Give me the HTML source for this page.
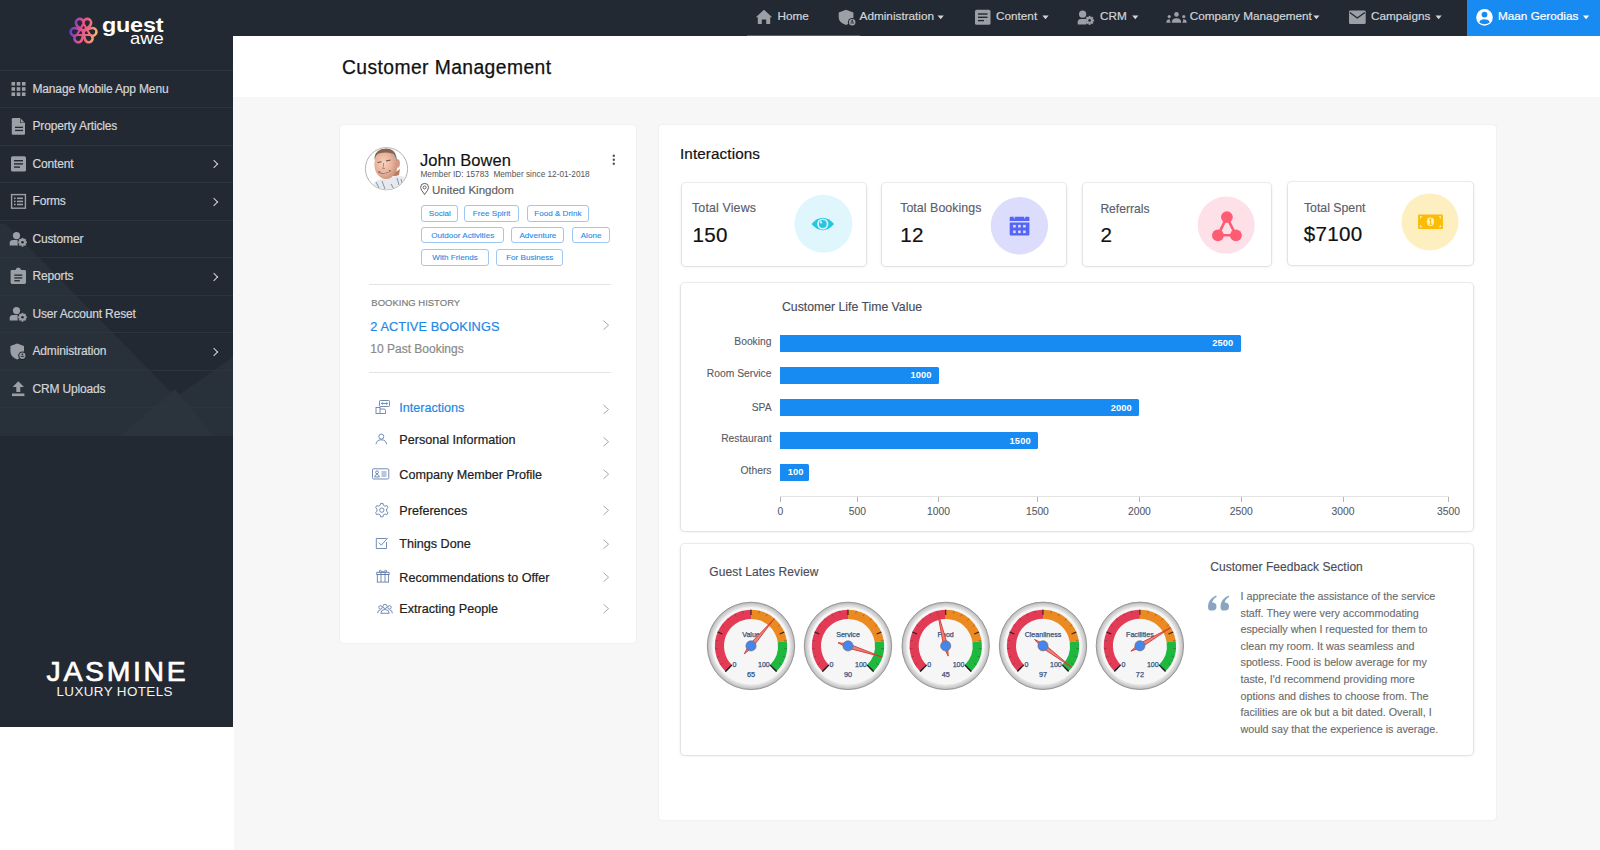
<!DOCTYPE html>
<html><head><meta charset="utf-8">
<style>
*{margin:0;padding:0;box-sizing:border-box}
html,body{width:1600px;height:850px;overflow:hidden;background:#f7f7f7;font-family:"Liberation Sans",sans-serif}
.a{position:absolute}
.t{position:absolute;white-space:nowrap;line-height:1}
#side{left:0;top:0;width:233px;height:727px;background:#232932;overflow:hidden}
#side .sep{position:absolute;left:0;width:233px;height:1px;background:#2d343e}
#side .it{position:absolute;left:32.5px;font-size:12px;letter-spacing:-0.16px;color:#d3d5d9;-webkit-text-stroke:0.2px #d3d5d9}
#side .chev{position:absolute;left:211px;width:6px;height:6px;border-right:1.6px solid #d3d5d9;border-top:1.6px solid #d3d5d9;transform:rotate(45deg)}
#top{left:233px;top:0;width:1367px;height:36px;background:#232932}
#hdr{left:233px;top:36px;width:1367px;height:61px;background:#fff}
#botwhite{left:0;top:727px;width:234px;height:123px;background:#fff}
.card{position:absolute;background:#fff;border-radius:3px;box-shadow:0 0 2px rgba(0,0,0,.10)}
.sc{position:absolute;background:#fff;border-radius:4px;box-shadow:0 0 0 1px rgba(30,30,60,.06),0 0.5px 2.5px 0.5px rgba(0,0,0,.09)}
.nav{font-size:11.75px;color:#d3d5d9;-webkit-text-stroke:0.2px currentColor}
.tag{position:absolute;height:16.3px;border:1px solid #9cc8f2;border-radius:3px;font-size:8.1px;color:#1e88e5;text-align:center;line-height:15.6px;-webkit-text-stroke:0.1px #1e88e5;white-space:nowrap}
.sl{font-size:12.4px;color:#5b5e6b;letter-spacing:0.15px;-webkit-text-stroke:0.15px #5b5e6b}
.sv{font-size:20.6px;color:#111;letter-spacing:0.3px;-webkit-text-stroke:0.2px #111}
.bl{font-size:9.3px;font-weight:bold;color:#fff;letter-spacing:0.1px}
.cl{font-size:10.3px;color:#555a63;-webkit-text-stroke:0.1px #555a63}
.fb{left:1240.5px;font-size:10.75px;color:#6b6b6b;-webkit-text-stroke:0.12px #6b6b6b}
.mi{left:399.3px;font-size:12.6px;color:#212121;-webkit-text-stroke:0.2px currentColor}
</style></head>
<body>
<!-- SIDEBAR -->

<div id="side" class="a">
 <svg class="a" style="left:0;top:0" width="233" height="436" viewBox="0 0 233 436">
  <polygon points="6,224 214,436 0,436 0,224" fill="#283039"/>
  <polygon points="233,357 233,436 120,436" fill="#283039"/>
  <polygon points="175,389 120,436 214,436" fill="#2b333d"/>
 </svg>
 <!-- logo -->
 <svg class="a" style="left:66px;top:15px" width="34" height="32" viewBox="66 15 34 32">
  <defs><linearGradient id="lg" gradientUnits="userSpaceOnUse" x1="70" y1="28" x2="97" y2="34"><stop offset="0" stop-color="#5a3cd6"/><stop offset="0.4" stop-color="#e4508c"/><stop offset="0.75" stop-color="#f07878"/><stop offset="1" stop-color="#f8c070"/></linearGradient></defs>
  <g fill="none" stroke="url(#lg)" stroke-width="2.6" stroke-linejoin="round"><path d="M83.50 31.00 C80.00 28.20 75.90 26.20 75.90 23.00 A3.8 3.8 0 0 1 83.50 22.40 A3.8 3.8 0 0 1 91.10 23.00 C91.10 26.20 87.00 28.20 83.50 31.00 Z"/><path d="M83.50 31.00 C87.67 29.37 91.46 26.82 94.23 28.42 A3.8 3.8 0 0 1 90.95 35.30 A3.8 3.8 0 0 1 86.63 41.58 C83.86 39.98 84.17 35.43 83.50 31.00 Z"/><path d="M83.50 31.00 C82.83 35.43 83.14 39.98 80.37 41.58 A3.8 3.8 0 0 1 76.05 35.30 A3.8 3.8 0 0 1 72.77 28.42 C75.54 26.82 79.33 29.37 83.50 31.00 Z"/><path d="M83.5 23.5 L76.8 35 L90.2 35 Z" stroke-width="2.2"/></g>
 </svg>
 <div class="t" style="left:102px;top:15.3px;font-size:20px;font-weight:bold;color:#fff;transform:scaleX(1.17);transform-origin:0 0;letter-spacing:-0.2px">guest</div>
 <div class="t" style="left:129.5px;top:30px;font-size:17px;color:#fff;transform:scaleX(1.08);transform-origin:0 0">awe</div>

 <div class="sep" style="top:70px"></div>
 <div class="sep" style="top:107px"></div>
 <div class="sep" style="top:145px"></div>
 <div class="sep" style="top:182px"></div>
 <div class="sep" style="top:220px"></div>
 <div class="sep" style="top:257px"></div>
 <div class="sep" style="top:295px"></div>
 <div class="sep" style="top:332px"></div>
 <div class="sep" style="top:370px"></div>
 <div class="sep" style="top:407px"></div>

 <!-- icons -->
 <svg class="a" style="left:0;top:0" width="40" height="400" viewBox="0 0 40 400">
  <g fill="#9b9fa6">
   <!-- grid -->
   <rect x="11.5" y="82" width="3.6" height="3.6"/><rect x="16.7" y="82" width="3.6" height="3.6"/><rect x="21.9" y="82" width="3.6" height="3.6"/>
   <rect x="11.5" y="87.2" width="3.6" height="3.6"/><rect x="16.7" y="87.2" width="3.6" height="3.6"/><rect x="21.9" y="87.2" width="3.6" height="3.6"/>
   <rect x="11.5" y="92.4" width="3.6" height="3.6"/><rect x="16.7" y="92.4" width="3.6" height="3.6"/><rect x="21.9" y="92.4" width="3.6" height="3.6"/>
   <!-- doc -->
   <path d="M13 118 H20 L25 123 V133.5 Q25 134.7 23.8 134.7 H13 Q11.8 134.7 11.8 133.5 V119.2 Q11.8 118 13 118 Z"/>
   <!-- content -->
   <rect x="11" y="156.3" width="15" height="15.2" rx="1.6"/>
   <!-- clipboard -->
   <path d="M12 270 H15.5 Q16 267.5 18.3 267.5 Q20.6 267.5 21.1 270 H24.6 Q26 270 26 271.4 V282.6 Q26 284 24.6 284 H12 Q10.6 284 10.6 282.6 V271.4 Q10.6 270 12 270 Z"/>
   <!-- person+gear x2 -->
   <circle cx="16.5" cy="235.6" r="3.6"/>
   <path d="M9.7 245.5 V243 Q9.7 240 13 240 H17.5 L17.8 245.5 Z"/>
   <circle cx="16.5" cy="310.6" r="3.6"/>
   <path d="M9.7 320.5 V318 Q9.7 315 13 315 H17.5 L17.8 320.5 Z"/>
   <!-- shield -->
   <path d="M17.2 343.4 L24 346 V351 Q24 357 17.2 359.5 Q10.4 357 10.4 351 V346 Z"/>
   <!-- upload -->
   <path d="M18.3 381.3 L24 387 H20.3 V392 H16.3 V387 H12.6 Z"/>
   <rect x="12" y="393.5" width="12.4" height="2.6"/>
  </g>
  <g fill="none" stroke="#9b9fa6">
   <!-- forms outline -->
   <rect x="11.6" y="194.6" width="13.8" height="13.6" stroke-width="1.4"/>
  </g>
  <g fill="#222831">
   <path d="M20 118 V123 H25 Z" fill="#222831"/><path d="M20.6 118.6 V122.4 H24.4 Z" fill="#9b9fa6"/><rect x="15" y="126.7" width="8" height="1.3"/><rect x="15" y="129.8" width="8" height="1.3"/>
   <rect x="14" y="160" width="9" height="1.4"/><rect x="14" y="163.2" width="9" height="1.4"/><rect x="14" y="166.4" width="6" height="1.4"/>
   <rect x="14.3" y="274.5" width="8" height="1.3"/><rect x="14.3" y="277.3" width="8" height="1.3"/><rect x="14.3" y="280.1" width="5.5" height="1.3"/>
   <circle cx="22.4" cy="355.7" r="4.2"/>
  </g>
  <g fill="#9b9fa6">
   <rect x="14" y="197.5" width="1.6" height="1.6"/><rect x="17" y="197.5" width="6" height="1.6"/>
   <rect x="14" y="200.6" width="1.6" height="1.6"/><rect x="17" y="200.6" width="6" height="1.6"/>
   <rect x="14" y="203.7" width="1.6" height="1.6"/><rect x="17" y="203.7" width="6" height="1.6"/>
   <circle cx="22.4" cy="355.7" r="3.1"/>
   <!-- gears -->
   <g transform="translate(22.5 242.3)"><circle r="3.2"/><g id="gt"><rect x="-1" y="-4.4" width="2" height="8.8"/><rect x="-1" y="-4.4" width="2" height="8.8" transform="rotate(45)"/><rect x="-1" y="-4.4" width="2" height="8.8" transform="rotate(90)"/><rect x="-1" y="-4.4" width="2" height="8.8" transform="rotate(135)"/></g></g>
   <g transform="translate(22.5 317.3)"><circle r="3.2"/><rect x="-1" y="-4.4" width="2" height="8.8"/><rect x="-1" y="-4.4" width="2" height="8.8" transform="rotate(45)"/><rect x="-1" y="-4.4" width="2" height="8.8" transform="rotate(90)"/><rect x="-1" y="-4.4" width="2" height="8.8" transform="rotate(135)"/></g>
  </g>
  <g fill="#222831">
   <circle cx="22.5" cy="242.3" r="1.3"/><circle cx="22.5" cy="317.3" r="1.3"/>
   <rect x="20.6" y="355.9" width="3.6" height="0.9"/><circle cx="22.4" cy="354.3" r="0.9"/>
  </g>
 </svg>

 <div class="it" style="top:81.8px">Manage Mobile App Menu</div>
 <div class="it" style="top:119.3px">Property Articles</div>
 <div class="it" style="top:156.8px">Content</div>
 <div class="it" style="top:194.3px">Forms</div>
 <div class="it" style="top:231.8px">Customer</div>
 <div class="it" style="top:269.3px">Reports</div>
 <div class="it" style="top:306.8px">User Account Reset</div>
 <div class="it" style="top:344.3px">Administration</div>
 <div class="it" style="top:381.8px">CRM Uploads</div>
 <div class="chev" style="top:161px"></div>
 <div class="chev" style="top:198.5px"></div>
 <div class="chev" style="top:273.5px"></div>
 <div class="chev" style="top:348.5px"></div>

 <div class="t" style="left:46.5px;top:657px;font-size:28.4px;color:#fff;letter-spacing:2.7px;-webkit-text-stroke:0.7px #fff">JASMINE</div>
 <div class="t" style="left:56.5px;top:684.5px;font-size:13.4px;color:#f4f4f4;letter-spacing:0.4px">LUXURY HOTELS</div>
</div>

<div id="botwhite" class="a"></div>
<!-- TOPBAR -->
<div id="top" class="a"></div>
<div class="a" style="left:747px;top:35px;width:113px;height:1px;background:#5a5f66"></div>
<div class="a" style="left:1466.5px;top:0;width:133.5px;height:36px;background:#178bf2"></div>
<svg class="a" style="left:740px;top:0" width="860" height="36" viewBox="740 0 860 36">
 <g fill="#9b9fa6">
  <!-- home -->
  <path d="M764 9.8 L772.2 17.2 H770.2 V23.9 H766.2 V19.5 H761.8 V23.9 H757.8 V17.2 H755.8 Z"/>
  <!-- admin shield -->
  <path d="M846 9.8 L853.4 12.5 V17.5 Q853.4 22.5 846 24.9 Q838.7 22.5 838.7 17.5 V12.5 Z"/>
  <!-- content doc -->
  <rect x="975" y="9.8" width="15.5" height="15" rx="1.6"/>
  <!-- crm -->
  <circle cx="1082.6" cy="14.2" r="3.6"/>
  <path d="M1077.7 24.6 V22 Q1077.7 19 1081 19 H1086 L1086.3 24.6 Z"/>
  <g transform="translate(1089.6 20.4)"><circle r="3.3"/><rect x="-1" y="-4.5" width="2" height="9"/><rect x="-1" y="-4.5" width="2" height="9" transform="rotate(45)"/><rect x="-1" y="-4.5" width="2" height="9" transform="rotate(90)"/><rect x="-1" y="-4.5" width="2" height="9" transform="rotate(135)"/></g>
  <!-- company people -->
  <circle cx="1176.5" cy="14.4" r="2.3"/>
  <path d="M1171.8 22.7 Q1171.8 18.3 1176.5 18.3 Q1181.2 18.3 1181.2 22.7 Z"/>
  <circle cx="1169.2" cy="16.6" r="1.6"/>
  <path d="M1166.3 22.7 Q1166.3 19.3 1169.6 19.3 L1170.6 22.7 Z"/>
  <circle cx="1183.8" cy="16.6" r="1.6"/>
  <path d="M1186.7 22.7 Q1186.7 19.3 1183.4 19.3 L1182.4 22.7 Z"/>
  <!-- envelope -->
  <rect x="1349" y="10.6" width="16.7" height="13.4" rx="1.2"/>
 </g>
 <g fill="none" stroke="#222831" stroke-width="1.3">
  <path d="M1349.8 12.4 L1357.35 18 L1364.9 12.4"/>
 </g>
 <g fill="#222831">
  <circle cx="1089.6" cy="20.4" r="1.3"/>
  <circle cx="852.2" cy="22.3" r="4.3"/>
  <rect x="978" y="13.3" width="9.5" height="1.4"/><rect x="978" y="16.6" width="9.5" height="1.4"/><rect x="978" y="19.9" width="6" height="1.4"/>
 </g>
 <g fill="#9b9fa6">
  <circle cx="852.2" cy="22.3" r="3.2"/>
 </g>
 <g fill="#222831">
  <circle cx="852.2" cy="21" r="0.9"/><rect x="850.4" y="22.5" width="3.6" height="0.9"/>
 </g>
 <!-- carets -->
 <g fill="#d3d5d9">
  <path d="M937.6 15.5 H943.8 L940.7 19.3 Z"/>
  <path d="M1042.4 15.5 H1048.6 L1045.5 19.3 Z"/>
  <path d="M1132.2 15.5 H1138.4 L1135.3 19.3 Z"/>
  <path d="M1313.3 15.5 H1319.5 L1316.4 19.3 Z"/>
  <path d="M1435.5 15.5 H1441.7 L1438.6 19.3 Z"/>
 </g>
 <path d="M1583 15.5 H1589.2 L1586.1 19.3 Z" fill="#fff"/>
 <!-- user icon -->
 <circle cx="1484.5" cy="17.4" r="8.3" fill="#fff"/>
 <circle cx="1484.5" cy="14.6" r="2.9" fill="#178bf2"/>
 <path d="M1479.3 22.5 Q1480 19.3 1484.5 19.3 Q1489 19.3 1489.7 22.5 Q1487.5 24.3 1484.5 24.3 Q1481.5 24.3 1479.3 22.5 Z" fill="#178bf2"/>
</svg>
<div class="t nav" style="top:10px;left:777.5px">Home</div>
<div class="t nav" style="top:10px;left:859.6px">Administration</div>
<div class="t nav" style="top:10px;left:996px">Content</div>
<div class="t nav" style="top:10px;left:1100px">CRM</div>
<div class="t nav" style="top:10px;left:1189.7px">Company Management</div>
<div class="t nav" style="top:10px;left:1370.9px">Campaigns</div>
<div class="t nav" style="top:10px;left:1498px;color:#fff">Maan Gerodias</div>

<!-- HEADER -->
<div id="hdr" class="a"></div>
<div class="t" style="left:342px;top:58.1px;font-size:19.3px;letter-spacing:0.42px;color:#111;-webkit-text-stroke:0.25px #111">Customer Management</div>

<!-- PROFILE CARD -->
<div class="card" style="left:340px;top:125px;width:296px;height:518px"></div>
<svg class="a" style="left:362px;top:144px" width="50" height="50" viewBox="0 0 50 50">
 <defs><clipPath id="av"><circle cx="24.5" cy="24.7" r="20.8"/></clipPath>
 <radialGradient id="skin" cx="0.4" cy="0.45" r="0.65"><stop offset="0" stop-color="#f6d2c0"/><stop offset="0.55" stop-color="#e9b399"/><stop offset="1" stop-color="#c58a72"/></radialGradient></defs>
 <circle cx="24.5" cy="24.7" r="21.1" fill="#fff" stroke="#9e9e9e" stroke-width="0.8"/>
 <g clip-path="url(#av)">
  <path d="M6 50 Q9 40 16 36 Q24 33 30 33 Q38 30 44 34 L48 50 Z" fill="#e6e9ee"/>
  <path d="M14 38 L17 44 M20 37 L23 45 M35 34 L37 41 M39 35 L41 42 M29 40 L33 47" stroke="#7a8797" stroke-width="0.9"/>
  <path d="M24 28 Q30 34 37 31 L38 25 Q33 30 27 27 Z" fill="#b77a62"/>
  <ellipse cx="24" cy="20.5" rx="11.6" ry="14.6" fill="url(#skin)"/>
  <ellipse cx="35.6" cy="19.5" rx="2.3" ry="4.2" fill="#d49a82"/>
  <path d="M12.4 14 Q13 5 24 4.4 Q33 4.4 34.5 13 L34.4 18 Q33 11 30 9.5 Q24 7.5 17 9.5 Q13.5 11 13 16 Z" fill="#85654f"/>
  <path d="M30.5 9.5 Q34 11.5 34.4 18 L33 19 Q32.5 13.5 29.5 10.5 Z" fill="#bdb3aa"/>
  <path d="M16.5 27.5 Q22 31 28.5 26.5" stroke="#8a4e3e" stroke-width="1.5" fill="none"/>
  <path d="M17.5 27.8 Q22 30 27 27.2" stroke="#f3ede8" stroke-width="0.8" fill="none"/>
  <path d="M15.5 18.5 L19.5 17.8 M24 17 L28.5 16" stroke="#6e4c40" stroke-width="1.1"/>
  <path d="M21.5 19 Q22 23 20.5 24.5 L23 24.6" stroke="#b57d68" stroke-width="0.9" fill="none"/>
 </g>
</svg>
<div class="t" style="left:420px;top:152px;font-size:16.5px;color:#111;-webkit-text-stroke:0.15px #111">John Bowen</div>
<div class="t" style="left:420.5px;top:171px;font-size:8.25px;color:#555">Member ID: 15783&nbsp; Member since 12-01-2018</div>
<svg class="a" style="left:419px;top:182px" width="12" height="14" viewBox="0 0 12 14">
 <path d="M5.6 12.5 Q1.6 7.6 1.6 5.4 A4 4 0 0 1 9.6 5.4 Q9.6 7.6 5.6 12.5 Z" fill="none" stroke="#444" stroke-width="0.85"/>
 <circle cx="5.6" cy="5.4" r="1.5" fill="none" stroke="#444" stroke-width="0.8"/>
</svg>
<div class="t" style="left:432px;top:185px;font-size:11.5px;color:#5e5e5e;-webkit-text-stroke:0.15px #5e5e5e">United Kingdom</div>

<div class="tag" style="left:421.3px;top:205.3px;width:37px">Social</div>
<div class="tag" style="left:463.7px;top:205.3px;width:55.7px">Free Spirit</div>
<div class="tag" style="left:526.9px;top:205.3px;width:61.9px">Food &amp; Drink</div>
<div class="tag" style="left:421.3px;top:226.7px;width:82.8px">Outdoor Activities</div>
<div class="tag" style="left:511.3px;top:226.7px;width:53.2px">Adventure</div>
<div class="tag" style="left:572.4px;top:226.7px;width:37.3px">Alone</div>
<div class="tag" style="left:421.3px;top:249.3px;width:67.4px">With Friends</div>
<div class="tag" style="left:496.2px;top:249.3px;width:67.2px">For Business</div>

<svg class="a" style="left:610px;top:153px" width="8" height="14" viewBox="0 0 8 14">
 <circle cx="3.8" cy="2.8" r="1.2" fill="#555"/><circle cx="3.8" cy="6.8" r="1.2" fill="#555"/><circle cx="3.8" cy="10.8" r="1.2" fill="#555"/>
</svg>

<div class="a" style="left:369px;top:284px;width:241.5px;height:1px;background:#e3e3e3"></div>
<div class="t" style="left:371.3px;top:297.5px;font-size:9.5px;color:#7a7a7a;-webkit-text-stroke:0.15px #7a7a7a">BOOKING HISTORY</div>
<div class="t" style="left:370.3px;top:321px;font-size:12.75px;color:#1e88e5;letter-spacing:0.1px;-webkit-text-stroke:0.2px #1e88e5">2 ACTIVE BOOKINGS</div>
<div class="t" style="left:370.3px;top:342.8px;font-size:12px;color:#8a8a8a;letter-spacing:0px;-webkit-text-stroke:0.2px #8a8a8a">10 Past Bookings</div>
<div class="a" style="left:369px;top:371.5px;width:241.5px;height:1px;background:#e3e3e3"></div>

<div class="t mi" style="top:401.8px;color:#1e88e5">Interactions</div>
<div class="t mi" style="top:434.2px">Personal Information</div>
<div class="t mi" style="top:468.5px">Company Member Profile</div>
<div class="t mi" style="top:504.8px">Preferences</div>
<div class="t mi" style="top:538.4px">Things Done</div>
<div class="t mi" style="top:571.6px">Recommendations to Offer</div>
<div class="t mi" style="top:603.1px">Extracting People</div>

<svg class="a" style="left:360px;top:310px" width="260" height="320" viewBox="360 310 260 320">
 <g fill="none" stroke="#a3a9b1" stroke-width="1" stroke-linecap="round" stroke-linejoin="round">
  <path d="M603.8 321 L608.6 325.2 L603.8 329.4"/>
  <path d="M603.8 405.3 L608.6 409.5 L603.8 413.7"/>
  <path d="M603.8 437.5 L608.6 441.7 L603.8 445.9"/>
  <path d="M603.8 470 L608.6 474.2 L603.8 478.4"/>
  <path d="M603.8 506.2 L608.6 510.4 L603.8 514.6"/>
  <path d="M603.8 540 L608.6 544.2 L603.8 548.4"/>
  <path d="M603.8 573 L608.6 577.2 L603.8 581.4"/>
  <path d="M603.8 604.5 L608.6 608.7 L603.8 612.9"/>
 </g>
 <g fill="none" stroke="#6580aa" stroke-width="0.9">
  <!-- interactions icon -->
  <rect x="379.5" y="400.5" width="10" height="6" rx="0.8"/>
  <path d="M381.5 403.5 H387.5 M382.5 402.3 L381.5 403.5 L382.5 404.7 M386.5 402.3 L387.5 403.5 L386.5 404.7"/>
  <rect x="376" y="407.5" width="4" height="6" />
  <path d="M380 409 H384 Q385.5 409 385.5 410.5 V413.5 H380"/>
  <!-- person -->
  <circle cx="381.3" cy="436.6" r="2.5"/>
  <path d="M376 444.2 Q376.5 439.8 381.3 439.8 Q386.1 439.8 386.6 444.2"/>
  <!-- id card -->
  <rect x="372.5" y="468.8" width="16.3" height="10.2" rx="1.2"/>
  <circle cx="377" cy="472.3" r="1.4"/>
  <path d="M374.6 477 Q375 474.5 377 474.5 Q379 474.5 379.4 477 Z"/>
  <path d="M381.5 472 H386.5 M381.5 474 H386.5 M381.5 476 H386.5"/>
  <!-- gear -->
  <circle cx="381.8" cy="510.1" r="2.2"/>
  <path d="M380.6 503.4 H383 L383.4 505.3 L385 506.2 L386.8 505.5 L388 507.6 L386.6 508.9 V511.3 L388 512.6 L386.8 514.7 L385 514 L383.4 514.9 L383 516.8 H380.6 L380.2 514.9 L378.6 514 L376.8 514.7 L375.6 512.6 L377 511.3 V508.9 L375.6 507.6 L376.8 505.5 L378.6 506.2 L380.2 505.3 Z"/>
  <!-- check box -->
  <path d="M386.5 538.5 H376.3 V548.5 H386.5 V542"/>
  <path d="M378.8 542.5 L381.3 545.2 L387.8 537.8"/>
  <!-- gift -->
  <rect x="377.3" y="574.5" width="11.3" height="7.6"/>
  <rect x="376.8" y="572.3" width="12.3" height="2.2"/>
  <path d="M381 572.3 V582 M385 572.3 V582"/>
  <path d="M383 572.3 Q380 569 379 571 Q378.5 572.3 383 572.3 Q386 569 387 571 Q387.5 572.3 383 572.3"/>
  <!-- people -->
  <circle cx="385" cy="606.4" r="2.1"/>
  <circle cx="380.5" cy="607.4" r="1.7"/>
  <circle cx="389.5" cy="607.4" r="1.7"/>
  <path d="M380.8 613.3 Q381 609.5 385 609.5 Q389 609.5 389.2 613.3 Z"/>
  <path d="M377.6 613.3 Q377.8 609.9 380.5 609.9 M392.4 613.3 Q392.2 609.9 389.5 609.9"/>
 </g>
</svg>


<!-- INTERACTIONS CARD -->
<div class="card" style="left:659px;top:125px;width:837px;height:695px"></div>
<div class="t" style="left:680px;top:145.5px;font-size:15.25px;letter-spacing:0.1px;color:#111;-webkit-text-stroke:0.2px #111">Interactions</div>

<div class="sc" style="left:682px;top:182.5px;width:184px;height:83px"></div>
<div class="sc" style="left:882px;top:182.5px;width:184px;height:83px"></div>
<div class="sc" style="left:1083px;top:183px;width:188px;height:83px"></div>
<div class="sc" style="left:1288px;top:182px;width:185px;height:83px"></div>
<div class="t sl" style="left:692px;top:201.8px">Total Views</div>
<div class="t sl" style="left:900.2px;top:201.8px;letter-spacing:0.05px">Total Bookings</div>
<div class="t sl" style="left:1100.4px;top:202.5px;font-size:12.1px;letter-spacing:0">Referrals</div>
<div class="t sl" style="left:1303.9px;top:201.6px;font-size:12.3px;letter-spacing:0">Total Spent</div>
<div class="t sv" style="left:692.5px;top:224.5px">150</div>
<div class="t sv" style="left:900.3px;top:224.5px">12</div>
<div class="t sv" style="left:1100.5px;top:225.2px">2</div>
<div class="t sv" style="left:1303.8px;top:224.2px">$7100</div>
<svg class="a" style="left:780px;top:180px" width="700" height="90" viewBox="780 180 700 90">
 <circle cx="823.4" cy="223.8" r="29" fill="#dff7fc"/>
 <circle cx="1019.4" cy="225.8" r="28.7" fill="#dcdcfc"/>
 <circle cx="1226.2" cy="225.1" r="28.5" fill="#fde0e8"/>
 <circle cx="1430" cy="221.9" r="28.5" fill="#fdefc0"/>
 <!-- eye -->
 <path d="M811.5 224 Q822.8 211.5 834.1 224 Q822.8 236.5 811.5 224 Z" fill="#26c6e2"/>
 <circle cx="822.8" cy="224" r="5.6" fill="#dff7fc"/>
 <circle cx="822.8" cy="224" r="3.9" fill="#26c6e2"/>
 <circle cx="821.1" cy="222.4" r="1.1" fill="#dff7fc"/>
 <!-- calendar -->
 <g fill="#5566f5">
  <path d="M1010.7 216.8 H1013.8 V218.5 H1014.8 V216.8 H1024.2 V218.5 H1025.2 V216.8 H1028.4 Q1029.4 216.8 1029.4 217.8 V221 H1009.7 V217.8 Q1009.7 216.8 1010.7 216.8 Z"/>
  <path d="M1009.7 222.6 H1029.4 V234.6 Q1029.4 235.6 1028.4 235.6 H1010.7 Q1009.7 235.6 1009.7 234.6 Z"/>
 </g>
 <g fill="#dcdcfc">
  <rect x="1013.1" y="224.9" width="2.6" height="2.6"/><rect x="1018.1" y="224.9" width="2.6" height="2.6"/><rect x="1023.1" y="224.9" width="2.6" height="2.6"/>
  <rect x="1013.1" y="230.5" width="2.6" height="2.6"/><rect x="1018.1" y="230.5" width="2.6" height="2.6"/><rect x="1023.1" y="230.5" width="2.6" height="2.6"/>
 </g>
 <!-- referral -->
 <g fill="#fe5c73">
  <path d="M1226.9 217.1 L1217.9 235.3 L1235.9 235.3 Z" fill="none" stroke="#fe5c73" stroke-width="2.6" stroke-linejoin="round"/>
  <circle cx="1226.9" cy="217.1" r="5.9"/>
  <circle cx="1217.9" cy="235.3" r="5.9"/>
  <circle cx="1235.9" cy="235.3" r="5.9"/>
 </g>
 <!-- money -->
 <rect x="1418.1" y="214.4" width="24.8" height="14.7" rx="1.2" fill="#fcbc05"/>
 <ellipse cx="1430.4" cy="221.7" rx="3.6" ry="4.2" fill="#fdefc0"/>
 <path d="M1429.2 219.8 L1430.6 218.9 V224.2 M1429.3 224.3 H1431.9" stroke="#fcbc05" stroke-width="1" fill="none"/>
 <g fill="#fdefc0">
  <path d="M1420 216.3 H1422.5 L1420 218.8 Z"/>
  <path d="M1441 216.3 H1438.5 L1441 218.8 Z"/>
  <path d="M1420 227.2 H1422.5 L1420 224.7 Z"/>
  <path d="M1441 227.2 H1438.5 L1441 224.7 Z"/>
 </g>
</svg>

<div class="sc" style="left:681px;top:283px;width:792px;height:248px"></div>
<div class="t" style="left:782px;top:300.5px;font-size:12.25px;color:#4a4d57;-webkit-text-stroke:0.15px #4a4d57">Customer Life Time Value</div>
<div class="a" style="left:780.3px;top:334.5px;width:460.3px;height:17px;background:#178bf2;border-radius:0 1.5px 1.5px 0"></div>
<div class="t bl" style="left:780px;width:453.3px;top:339.1px;text-align:right">2500</div>
<div class="a" style="left:780.3px;top:366.6px;width:158.5px;height:17px;background:#178bf2;border-radius:0 1.5px 1.5px 0"></div>
<div class="t bl" style="left:780px;width:151.5px;top:371.2px;text-align:right">1000</div>
<div class="a" style="left:780.3px;top:399.2px;width:358.8px;height:17px;background:#178bf2;border-radius:0 1.5px 1.5px 0"></div>
<div class="t bl" style="left:780px;width:351.8px;top:403.8px;text-align:right">2000</div>
<div class="a" style="left:780.3px;top:432px;width:257.7px;height:17px;background:#178bf2;border-radius:0 1.5px 1.5px 0"></div>
<div class="t bl" style="left:780px;width:250.7px;top:436.6px;text-align:right">1500</div>
<div class="a" style="left:780.3px;top:463.8px;width:28.3px;height:17px;background:#178bf2;border-radius:0 1.5px 1.5px 0"></div>
<div class="t bl" style="left:780px;width:23.6px;top:468.4px;text-align:right">100</div>
<div class="t cl" style="left:671px;width:100.5px;top:336.6px;text-align:right">Booking</div>
<div class="t cl" style="left:671px;width:100.5px;top:368.7px;text-align:right">Room Service</div>
<div class="t cl" style="left:671px;width:100.5px;top:402.7px;text-align:right">SPA</div>
<div class="t cl" style="left:671px;width:100.5px;top:433.9px;text-align:right">Restaurant</div>
<div class="t cl" style="left:671px;width:100.5px;top:465.6px;text-align:right">Others</div>
<div class="a" style="left:780.3px;top:496.3px;width:669px;height:1px;background:#e4e4e4"></div>
<div class="a" style="left:779.8px;top:497px;width:1px;height:5px;background:#b5b5b5"></div>
<div class="t cl" style="left:750.3px;width:60px;top:506.8px;text-align:center">0</div>
<div class="a" style="left:856.9px;top:497px;width:1px;height:5px;background:#b5b5b5"></div>
<div class="t cl" style="left:827.4px;width:60px;top:506.8px;text-align:center">500</div>
<div class="a" style="left:938.0px;top:497px;width:1px;height:5px;background:#b5b5b5"></div>
<div class="t cl" style="left:908.5px;width:60px;top:506.8px;text-align:center">1000</div>
<div class="a" style="left:1036.9px;top:497px;width:1px;height:5px;background:#b5b5b5"></div>
<div class="t cl" style="left:1007.4px;width:60px;top:506.8px;text-align:center">1500</div>
<div class="a" style="left:1138.9px;top:497px;width:1px;height:5px;background:#b5b5b5"></div>
<div class="t cl" style="left:1109.4px;width:60px;top:506.8px;text-align:center">2000</div>
<div class="a" style="left:1240.7px;top:497px;width:1px;height:5px;background:#b5b5b5"></div>
<div class="t cl" style="left:1211.2px;width:60px;top:506.8px;text-align:center">2500</div>
<div class="a" style="left:1342.5px;top:497px;width:1px;height:5px;background:#b5b5b5"></div>
<div class="t cl" style="left:1313.0px;width:60px;top:506.8px;text-align:center">3000</div>
<div class="a" style="left:1448.0px;top:497px;width:1px;height:5px;background:#b5b5b5"></div>
<div class="t cl" style="left:1418.5px;width:60px;top:506.8px;text-align:center">3500</div>
<div class="sc" style="left:681px;top:544px;width:792px;height:211px"></div>
<div class="t" style="left:709.3px;top:566px;font-size:12px;color:#4a4d57;letter-spacing:0.1px;-webkit-text-stroke:0.15px #4a4d57">Guest Lates Review</div>
<svg class="a" style="left:690px;top:590px" width="510" height="110" viewBox="690 590 510 110"><defs><radialGradient id="ring" cx="0.5" cy="0.5" r="0.5"><stop offset="0.88" stop-color="#e6e6e6"/><stop offset="0.94" stop-color="#d4d4d4"/><stop offset="1" stop-color="#b4b4b4"/></radialGradient></defs>
<circle cx="751" cy="645.9" r="43.7" fill="url(#ring)" stroke="#8f8f8f" stroke-width="0.9"/>
<circle cx="751" cy="645.9" r="39.2" fill="#f6f6f6" stroke="#e6e6e6" stroke-width="0.8"/>
<path d="M725.47 671.43 A36.1 36.1 0 0 1 751.00 609.80 L751.00 618.90 A27 27 0 0 0 731.91 664.99 Z" fill="#e33b55"/>
<path d="M751.00 609.80 A36.1 36.1 0 0 1 786.78 641.09 L777.76 642.31 A27 27 0 0 0 751.00 618.90 Z" fill="#ea8a20"/>
<path d="M786.78 641.09 A36.1 36.1 0 0 1 776.53 671.43 L770.09 664.99 A27 27 0 0 0 777.76 642.31 Z" fill="#1eb83e"/>
<line x1="720.22" y1="664.76" x2="722.61" y2="663.30" stroke="#333" stroke-opacity="0.55" stroke-width="0.65"/>
<line x1="716.67" y1="657.06" x2="719.33" y2="656.19" stroke="#333" stroke-opacity="0.55" stroke-width="0.65"/>
<line x1="715.01" y1="648.73" x2="717.80" y2="648.51" stroke="#333" stroke-opacity="0.55" stroke-width="0.65"/>
<line x1="715.34" y1="640.25" x2="718.11" y2="640.69" stroke="#333" stroke-opacity="0.55" stroke-width="0.65"/>
<line x1="721.79" y1="624.68" x2="724.06" y2="626.33" stroke="#333" stroke-opacity="0.55" stroke-width="0.65"/>
<line x1="727.55" y1="618.45" x2="729.37" y2="620.58" stroke="#333" stroke-opacity="0.55" stroke-width="0.65"/>
<line x1="734.61" y1="613.73" x2="735.88" y2="616.23" stroke="#333" stroke-opacity="0.55" stroke-width="0.65"/>
<line x1="742.57" y1="610.80" x2="743.23" y2="613.52" stroke="#333" stroke-opacity="0.55" stroke-width="0.65"/>
<line x1="759.43" y1="610.80" x2="758.77" y2="613.52" stroke="#333" stroke-opacity="0.55" stroke-width="0.65"/>
<line x1="767.39" y1="613.73" x2="766.12" y2="616.23" stroke="#333" stroke-opacity="0.55" stroke-width="0.65"/>
<line x1="774.45" y1="618.45" x2="772.63" y2="620.58" stroke="#333" stroke-opacity="0.55" stroke-width="0.65"/>
<line x1="780.21" y1="624.68" x2="777.94" y2="626.33" stroke="#333" stroke-opacity="0.55" stroke-width="0.65"/>
<line x1="786.66" y1="640.25" x2="783.89" y2="640.69" stroke="#333" stroke-opacity="0.55" stroke-width="0.65"/>
<line x1="786.99" y1="648.73" x2="784.20" y2="648.51" stroke="#333" stroke-opacity="0.55" stroke-width="0.65"/>
<line x1="785.33" y1="657.06" x2="782.67" y2="656.19" stroke="#333" stroke-opacity="0.55" stroke-width="0.65"/>
<line x1="781.78" y1="664.76" x2="779.39" y2="663.30" stroke="#333" stroke-opacity="0.55" stroke-width="0.65"/>
<line x1="725.47" y1="671.43" x2="729.08" y2="667.82" stroke="#222" stroke-width="1.1"/>
<line x1="717.65" y1="632.09" x2="722.36" y2="634.04" stroke="#222" stroke-width="1.1"/>
<line x1="751.00" y1="609.80" x2="751.00" y2="614.90" stroke="#222" stroke-width="1.1"/>
<line x1="784.35" y1="632.09" x2="779.64" y2="634.04" stroke="#222" stroke-width="1.1"/>
<line x1="776.53" y1="671.43" x2="772.92" y2="667.82" stroke="#222" stroke-width="1.1"/>
<line x1="725.47" y1="671.43" x2="731.91" y2="664.99" stroke="#222" stroke-width="1.3"/>
<line x1="776.53" y1="671.43" x2="770.09" y2="664.99" stroke="#222" stroke-width="1.3"/>
<text x="751" y="637.0" text-anchor="middle" font-size="7.1" fill="#36557f" stroke="#36557f" stroke-width="0.25">Value</text>
<text x="734.6" y="666.9" text-anchor="middle" font-size="7.1" fill="#36557f" stroke="#36557f" stroke-width="0.25">0</text>
<text x="763.9" y="666.9" text-anchor="middle" font-size="7.1" fill="#36557f" stroke="#36557f" stroke-width="0.25">100</text>
<text x="751" y="677.1" text-anchor="middle" font-size="7.3" fill="#36557f" stroke="#36557f" stroke-width="0.25">65</text>
<path d="M774.12 618.83 L749.40 644.54 L744.18 653.88 L752.60 647.26 Z" fill="#ec7f7f" stroke="#cf3a30" stroke-width="0.9" stroke-linejoin="round"/>
<circle cx="751" cy="645.9" r="5.1" fill="#4684ee" stroke="#7a6a5a" stroke-width="0.6"/>
<circle cx="848" cy="645.9" r="43.7" fill="url(#ring)" stroke="#8f8f8f" stroke-width="0.9"/>
<circle cx="848" cy="645.9" r="39.2" fill="#f6f6f6" stroke="#e6e6e6" stroke-width="0.8"/>
<path d="M822.47 671.43 A36.1 36.1 0 0 1 848.00 609.80 L848.00 618.90 A27 27 0 0 0 828.91 664.99 Z" fill="#e33b55"/>
<path d="M848.00 609.80 A36.1 36.1 0 0 1 883.78 641.09 L874.76 642.31 A27 27 0 0 0 848.00 618.90 Z" fill="#ea8a20"/>
<path d="M883.78 641.09 A36.1 36.1 0 0 1 873.53 671.43 L867.09 664.99 A27 27 0 0 0 874.76 642.31 Z" fill="#1eb83e"/>
<line x1="817.22" y1="664.76" x2="819.61" y2="663.30" stroke="#333" stroke-opacity="0.55" stroke-width="0.65"/>
<line x1="813.67" y1="657.06" x2="816.33" y2="656.19" stroke="#333" stroke-opacity="0.55" stroke-width="0.65"/>
<line x1="812.01" y1="648.73" x2="814.80" y2="648.51" stroke="#333" stroke-opacity="0.55" stroke-width="0.65"/>
<line x1="812.34" y1="640.25" x2="815.11" y2="640.69" stroke="#333" stroke-opacity="0.55" stroke-width="0.65"/>
<line x1="818.79" y1="624.68" x2="821.06" y2="626.33" stroke="#333" stroke-opacity="0.55" stroke-width="0.65"/>
<line x1="824.55" y1="618.45" x2="826.37" y2="620.58" stroke="#333" stroke-opacity="0.55" stroke-width="0.65"/>
<line x1="831.61" y1="613.73" x2="832.88" y2="616.23" stroke="#333" stroke-opacity="0.55" stroke-width="0.65"/>
<line x1="839.57" y1="610.80" x2="840.23" y2="613.52" stroke="#333" stroke-opacity="0.55" stroke-width="0.65"/>
<line x1="856.43" y1="610.80" x2="855.77" y2="613.52" stroke="#333" stroke-opacity="0.55" stroke-width="0.65"/>
<line x1="864.39" y1="613.73" x2="863.12" y2="616.23" stroke="#333" stroke-opacity="0.55" stroke-width="0.65"/>
<line x1="871.45" y1="618.45" x2="869.63" y2="620.58" stroke="#333" stroke-opacity="0.55" stroke-width="0.65"/>
<line x1="877.21" y1="624.68" x2="874.94" y2="626.33" stroke="#333" stroke-opacity="0.55" stroke-width="0.65"/>
<line x1="883.66" y1="640.25" x2="880.89" y2="640.69" stroke="#333" stroke-opacity="0.55" stroke-width="0.65"/>
<line x1="883.99" y1="648.73" x2="881.20" y2="648.51" stroke="#333" stroke-opacity="0.55" stroke-width="0.65"/>
<line x1="882.33" y1="657.06" x2="879.67" y2="656.19" stroke="#333" stroke-opacity="0.55" stroke-width="0.65"/>
<line x1="878.78" y1="664.76" x2="876.39" y2="663.30" stroke="#333" stroke-opacity="0.55" stroke-width="0.65"/>
<line x1="822.47" y1="671.43" x2="826.08" y2="667.82" stroke="#222" stroke-width="1.1"/>
<line x1="814.65" y1="632.09" x2="819.36" y2="634.04" stroke="#222" stroke-width="1.1"/>
<line x1="848.00" y1="609.80" x2="848.00" y2="614.90" stroke="#222" stroke-width="1.1"/>
<line x1="881.35" y1="632.09" x2="876.64" y2="634.04" stroke="#222" stroke-width="1.1"/>
<line x1="873.53" y1="671.43" x2="869.92" y2="667.82" stroke="#222" stroke-width="1.1"/>
<line x1="822.47" y1="671.43" x2="828.91" y2="664.99" stroke="#222" stroke-width="1.3"/>
<line x1="873.53" y1="671.43" x2="867.09" y2="664.99" stroke="#222" stroke-width="1.3"/>
<text x="848" y="637.0" text-anchor="middle" font-size="7.1" fill="#36557f" stroke="#36557f" stroke-width="0.25">Service</text>
<text x="831.6" y="666.9" text-anchor="middle" font-size="7.1" fill="#36557f" stroke="#36557f" stroke-width="0.25">0</text>
<text x="860.9" y="666.9" text-anchor="middle" font-size="7.1" fill="#36557f" stroke="#36557f" stroke-width="0.25">100</text>
<text x="848" y="677.1" text-anchor="middle" font-size="7.3" fill="#36557f" stroke="#36557f" stroke-width="0.25">90</text>
<path d="M881.86 656.90 L848.65 643.90 L838.01 642.66 L847.35 647.90 Z" fill="#ec7f7f" stroke="#cf3a30" stroke-width="0.9" stroke-linejoin="round"/>
<circle cx="848" cy="645.9" r="5.1" fill="#4684ee" stroke="#7a6a5a" stroke-width="0.6"/>
<circle cx="945.7" cy="645.9" r="43.7" fill="url(#ring)" stroke="#8f8f8f" stroke-width="0.9"/>
<circle cx="945.7" cy="645.9" r="39.2" fill="#f6f6f6" stroke="#e6e6e6" stroke-width="0.8"/>
<path d="M920.17 671.43 A36.1 36.1 0 0 1 945.70 609.80 L945.70 618.90 A27 27 0 0 0 926.61 664.99 Z" fill="#e33b55"/>
<path d="M945.70 609.80 A36.1 36.1 0 0 1 981.48 641.09 L972.46 642.31 A27 27 0 0 0 945.70 618.90 Z" fill="#ea8a20"/>
<path d="M981.48 641.09 A36.1 36.1 0 0 1 971.23 671.43 L964.79 664.99 A27 27 0 0 0 972.46 642.31 Z" fill="#1eb83e"/>
<line x1="914.92" y1="664.76" x2="917.31" y2="663.30" stroke="#333" stroke-opacity="0.55" stroke-width="0.65"/>
<line x1="911.37" y1="657.06" x2="914.03" y2="656.19" stroke="#333" stroke-opacity="0.55" stroke-width="0.65"/>
<line x1="909.71" y1="648.73" x2="912.50" y2="648.51" stroke="#333" stroke-opacity="0.55" stroke-width="0.65"/>
<line x1="910.04" y1="640.25" x2="912.81" y2="640.69" stroke="#333" stroke-opacity="0.55" stroke-width="0.65"/>
<line x1="916.49" y1="624.68" x2="918.76" y2="626.33" stroke="#333" stroke-opacity="0.55" stroke-width="0.65"/>
<line x1="922.25" y1="618.45" x2="924.07" y2="620.58" stroke="#333" stroke-opacity="0.55" stroke-width="0.65"/>
<line x1="929.31" y1="613.73" x2="930.58" y2="616.23" stroke="#333" stroke-opacity="0.55" stroke-width="0.65"/>
<line x1="937.27" y1="610.80" x2="937.93" y2="613.52" stroke="#333" stroke-opacity="0.55" stroke-width="0.65"/>
<line x1="954.13" y1="610.80" x2="953.47" y2="613.52" stroke="#333" stroke-opacity="0.55" stroke-width="0.65"/>
<line x1="962.09" y1="613.73" x2="960.82" y2="616.23" stroke="#333" stroke-opacity="0.55" stroke-width="0.65"/>
<line x1="969.15" y1="618.45" x2="967.33" y2="620.58" stroke="#333" stroke-opacity="0.55" stroke-width="0.65"/>
<line x1="974.91" y1="624.68" x2="972.64" y2="626.33" stroke="#333" stroke-opacity="0.55" stroke-width="0.65"/>
<line x1="981.36" y1="640.25" x2="978.59" y2="640.69" stroke="#333" stroke-opacity="0.55" stroke-width="0.65"/>
<line x1="981.69" y1="648.73" x2="978.90" y2="648.51" stroke="#333" stroke-opacity="0.55" stroke-width="0.65"/>
<line x1="980.03" y1="657.06" x2="977.37" y2="656.19" stroke="#333" stroke-opacity="0.55" stroke-width="0.65"/>
<line x1="976.48" y1="664.76" x2="974.09" y2="663.30" stroke="#333" stroke-opacity="0.55" stroke-width="0.65"/>
<line x1="920.17" y1="671.43" x2="923.78" y2="667.82" stroke="#222" stroke-width="1.1"/>
<line x1="912.35" y1="632.09" x2="917.06" y2="634.04" stroke="#222" stroke-width="1.1"/>
<line x1="945.70" y1="609.80" x2="945.70" y2="614.90" stroke="#222" stroke-width="1.1"/>
<line x1="979.05" y1="632.09" x2="974.34" y2="634.04" stroke="#222" stroke-width="1.1"/>
<line x1="971.23" y1="671.43" x2="967.62" y2="667.82" stroke="#222" stroke-width="1.1"/>
<line x1="920.17" y1="671.43" x2="926.61" y2="664.99" stroke="#222" stroke-width="1.3"/>
<line x1="971.23" y1="671.43" x2="964.79" y2="664.99" stroke="#222" stroke-width="1.3"/>
<text x="945.7" y="637.0" text-anchor="middle" font-size="7.1" fill="#36557f" stroke="#36557f" stroke-width="0.25">Food</text>
<text x="929.3" y="666.9" text-anchor="middle" font-size="7.1" fill="#36557f" stroke="#36557f" stroke-width="0.25">0</text>
<text x="958.6" y="666.9" text-anchor="middle" font-size="7.1" fill="#36557f" stroke="#36557f" stroke-width="0.25">100</text>
<text x="945.7" y="677.1" text-anchor="middle" font-size="7.3" fill="#36557f" stroke="#36557f" stroke-width="0.25">45</text>
<path d="M937.39 611.28 L943.66 646.39 L948.15 656.11 L947.74 645.41 Z" fill="#ec7f7f" stroke="#cf3a30" stroke-width="0.9" stroke-linejoin="round"/>
<circle cx="945.7" cy="645.9" r="5.1" fill="#4684ee" stroke="#7a6a5a" stroke-width="0.6"/>
<circle cx="1043" cy="645.8" r="43.7" fill="url(#ring)" stroke="#8f8f8f" stroke-width="0.9"/>
<circle cx="1043" cy="645.8" r="39.2" fill="#f6f6f6" stroke="#e6e6e6" stroke-width="0.8"/>
<path d="M1017.47 671.33 A36.1 36.1 0 0 1 1043.00 609.70 L1043.00 618.80 A27 27 0 0 0 1023.91 664.89 Z" fill="#e33b55"/>
<path d="M1043.00 609.70 A36.1 36.1 0 0 1 1078.78 640.99 L1069.76 642.21 A27 27 0 0 0 1043.00 618.80 Z" fill="#ea8a20"/>
<path d="M1078.78 640.99 A36.1 36.1 0 0 1 1068.53 671.33 L1062.09 664.89 A27 27 0 0 0 1069.76 642.21 Z" fill="#1eb83e"/>
<line x1="1012.22" y1="664.66" x2="1014.61" y2="663.20" stroke="#333" stroke-opacity="0.55" stroke-width="0.65"/>
<line x1="1008.67" y1="656.96" x2="1011.33" y2="656.09" stroke="#333" stroke-opacity="0.55" stroke-width="0.65"/>
<line x1="1007.01" y1="648.63" x2="1009.80" y2="648.41" stroke="#333" stroke-opacity="0.55" stroke-width="0.65"/>
<line x1="1007.34" y1="640.15" x2="1010.11" y2="640.59" stroke="#333" stroke-opacity="0.55" stroke-width="0.65"/>
<line x1="1013.79" y1="624.58" x2="1016.06" y2="626.23" stroke="#333" stroke-opacity="0.55" stroke-width="0.65"/>
<line x1="1019.55" y1="618.35" x2="1021.37" y2="620.48" stroke="#333" stroke-opacity="0.55" stroke-width="0.65"/>
<line x1="1026.61" y1="613.63" x2="1027.88" y2="616.13" stroke="#333" stroke-opacity="0.55" stroke-width="0.65"/>
<line x1="1034.57" y1="610.70" x2="1035.23" y2="613.42" stroke="#333" stroke-opacity="0.55" stroke-width="0.65"/>
<line x1="1051.43" y1="610.70" x2="1050.77" y2="613.42" stroke="#333" stroke-opacity="0.55" stroke-width="0.65"/>
<line x1="1059.39" y1="613.63" x2="1058.12" y2="616.13" stroke="#333" stroke-opacity="0.55" stroke-width="0.65"/>
<line x1="1066.45" y1="618.35" x2="1064.63" y2="620.48" stroke="#333" stroke-opacity="0.55" stroke-width="0.65"/>
<line x1="1072.21" y1="624.58" x2="1069.94" y2="626.23" stroke="#333" stroke-opacity="0.55" stroke-width="0.65"/>
<line x1="1078.66" y1="640.15" x2="1075.89" y2="640.59" stroke="#333" stroke-opacity="0.55" stroke-width="0.65"/>
<line x1="1078.99" y1="648.63" x2="1076.20" y2="648.41" stroke="#333" stroke-opacity="0.55" stroke-width="0.65"/>
<line x1="1077.33" y1="656.96" x2="1074.67" y2="656.09" stroke="#333" stroke-opacity="0.55" stroke-width="0.65"/>
<line x1="1073.78" y1="664.66" x2="1071.39" y2="663.20" stroke="#333" stroke-opacity="0.55" stroke-width="0.65"/>
<line x1="1017.47" y1="671.33" x2="1021.08" y2="667.72" stroke="#222" stroke-width="1.1"/>
<line x1="1009.65" y1="631.99" x2="1014.36" y2="633.94" stroke="#222" stroke-width="1.1"/>
<line x1="1043.00" y1="609.70" x2="1043.00" y2="614.80" stroke="#222" stroke-width="1.1"/>
<line x1="1076.35" y1="631.99" x2="1071.64" y2="633.94" stroke="#222" stroke-width="1.1"/>
<line x1="1068.53" y1="671.33" x2="1064.92" y2="667.72" stroke="#222" stroke-width="1.1"/>
<line x1="1017.47" y1="671.33" x2="1023.91" y2="664.89" stroke="#222" stroke-width="1.3"/>
<line x1="1068.53" y1="671.33" x2="1062.09" y2="664.89" stroke="#222" stroke-width="1.3"/>
<text x="1043" y="636.9" text-anchor="middle" font-size="7.1" fill="#36557f" stroke="#36557f" stroke-width="0.25">Cleanliness</text>
<text x="1026.6" y="666.8" text-anchor="middle" font-size="7.1" fill="#36557f" stroke="#36557f" stroke-width="0.25">0</text>
<text x="1055.9" y="666.8" text-anchor="middle" font-size="7.1" fill="#36557f" stroke="#36557f" stroke-width="0.25">100</text>
<text x="1043" y="677.0" text-anchor="middle" font-size="7.3" fill="#36557f" stroke="#36557f" stroke-width="0.25">97</text>
<path d="M1071.47 667.17 L1044.26 644.12 L1034.60 639.50 L1041.74 647.48 Z" fill="#ec7f7f" stroke="#cf3a30" stroke-width="0.9" stroke-linejoin="round"/>
<circle cx="1043" cy="645.8" r="5.1" fill="#4684ee" stroke="#7a6a5a" stroke-width="0.6"/>
<circle cx="1139.9" cy="645.8" r="43.7" fill="url(#ring)" stroke="#8f8f8f" stroke-width="0.9"/>
<circle cx="1139.9" cy="645.8" r="39.2" fill="#f6f6f6" stroke="#e6e6e6" stroke-width="0.8"/>
<path d="M1114.37 671.33 A36.1 36.1 0 0 1 1139.90 609.70 L1139.90 618.80 A27 27 0 0 0 1120.81 664.89 Z" fill="#e33b55"/>
<path d="M1139.90 609.70 A36.1 36.1 0 0 1 1175.68 640.99 L1166.66 642.21 A27 27 0 0 0 1139.90 618.80 Z" fill="#ea8a20"/>
<path d="M1175.68 640.99 A36.1 36.1 0 0 1 1165.43 671.33 L1158.99 664.89 A27 27 0 0 0 1166.66 642.21 Z" fill="#1eb83e"/>
<line x1="1109.12" y1="664.66" x2="1111.51" y2="663.20" stroke="#333" stroke-opacity="0.55" stroke-width="0.65"/>
<line x1="1105.57" y1="656.96" x2="1108.23" y2="656.09" stroke="#333" stroke-opacity="0.55" stroke-width="0.65"/>
<line x1="1103.91" y1="648.63" x2="1106.70" y2="648.41" stroke="#333" stroke-opacity="0.55" stroke-width="0.65"/>
<line x1="1104.24" y1="640.15" x2="1107.01" y2="640.59" stroke="#333" stroke-opacity="0.55" stroke-width="0.65"/>
<line x1="1110.69" y1="624.58" x2="1112.96" y2="626.23" stroke="#333" stroke-opacity="0.55" stroke-width="0.65"/>
<line x1="1116.45" y1="618.35" x2="1118.27" y2="620.48" stroke="#333" stroke-opacity="0.55" stroke-width="0.65"/>
<line x1="1123.51" y1="613.63" x2="1124.78" y2="616.13" stroke="#333" stroke-opacity="0.55" stroke-width="0.65"/>
<line x1="1131.47" y1="610.70" x2="1132.13" y2="613.42" stroke="#333" stroke-opacity="0.55" stroke-width="0.65"/>
<line x1="1148.33" y1="610.70" x2="1147.67" y2="613.42" stroke="#333" stroke-opacity="0.55" stroke-width="0.65"/>
<line x1="1156.29" y1="613.63" x2="1155.02" y2="616.13" stroke="#333" stroke-opacity="0.55" stroke-width="0.65"/>
<line x1="1163.35" y1="618.35" x2="1161.53" y2="620.48" stroke="#333" stroke-opacity="0.55" stroke-width="0.65"/>
<line x1="1169.11" y1="624.58" x2="1166.84" y2="626.23" stroke="#333" stroke-opacity="0.55" stroke-width="0.65"/>
<line x1="1175.56" y1="640.15" x2="1172.79" y2="640.59" stroke="#333" stroke-opacity="0.55" stroke-width="0.65"/>
<line x1="1175.89" y1="648.63" x2="1173.10" y2="648.41" stroke="#333" stroke-opacity="0.55" stroke-width="0.65"/>
<line x1="1174.23" y1="656.96" x2="1171.57" y2="656.09" stroke="#333" stroke-opacity="0.55" stroke-width="0.65"/>
<line x1="1170.68" y1="664.66" x2="1168.29" y2="663.20" stroke="#333" stroke-opacity="0.55" stroke-width="0.65"/>
<line x1="1114.37" y1="671.33" x2="1117.98" y2="667.72" stroke="#222" stroke-width="1.1"/>
<line x1="1106.55" y1="631.99" x2="1111.26" y2="633.94" stroke="#222" stroke-width="1.1"/>
<line x1="1139.90" y1="609.70" x2="1139.90" y2="614.80" stroke="#222" stroke-width="1.1"/>
<line x1="1173.25" y1="631.99" x2="1168.54" y2="633.94" stroke="#222" stroke-width="1.1"/>
<line x1="1165.43" y1="671.33" x2="1161.82" y2="667.72" stroke="#222" stroke-width="1.1"/>
<line x1="1114.37" y1="671.33" x2="1120.81" y2="664.89" stroke="#222" stroke-width="1.3"/>
<line x1="1165.43" y1="671.33" x2="1158.99" y2="664.89" stroke="#222" stroke-width="1.3"/>
<text x="1139.9" y="636.9" text-anchor="middle" font-size="7.1" fill="#36557f" stroke="#36557f" stroke-width="0.25">Facilities</text>
<text x="1123.5" y="666.8" text-anchor="middle" font-size="7.1" fill="#36557f" stroke="#36557f" stroke-width="0.25">0</text>
<text x="1152.8" y="666.8" text-anchor="middle" font-size="7.1" fill="#36557f" stroke="#36557f" stroke-width="0.25">100</text>
<text x="1139.9" y="677.0" text-anchor="middle" font-size="7.3" fill="#36557f" stroke="#36557f" stroke-width="0.25">72</text>
<path d="M1170.54 627.68 L1138.83 643.99 L1130.86 651.14 L1140.97 647.61 Z" fill="#ec7f7f" stroke="#cf3a30" stroke-width="0.9" stroke-linejoin="round"/>
<circle cx="1139.9" cy="645.8" r="5.1" fill="#4684ee" stroke="#7a6a5a" stroke-width="0.6"/>
</svg>
<div class="t" style="left:1210.2px;top:560.5px;font-size:12px;color:#4a4d57;letter-spacing:0.05px;-webkit-text-stroke:0.15px #4a4d57">Customer Feedback Section</div>
<svg class="a" style="left:1206.5px;top:592.5px" width="30" height="20" viewBox="0 0 30 20"><g fill="#8aa5c2"><path d="M2.6 17.4 Q0.7 16 1 13.2 Q1.5 6 9 2.6 L9.8 3.8 Q5.6 6.5 5.2 9.4 Q9.5 9.6 9.5 13.4 Q9.5 17.4 5.6 17.6 Q3.8 17.6 2.6 17.4 Z"/><path d="M15.1 17.4 Q13.2 16 13.5 13.2 Q14 6 21.5 2.6 L22.3 3.8 Q18.1 6.5 17.7 9.4 Q22 9.6 22 13.4 Q22 17.4 18.1 17.6 Q16.3 17.6 15.1 17.4 Z"/></g></svg>
<div class="t fb" style="top:591.2px">I appreciate the assistance of the service</div>
<div class="t fb" style="top:607.8px">staff. They were very accommodating</div>
<div class="t fb" style="top:624.3px">especially when I requested for them to</div>
<div class="t fb" style="top:640.9px">clean my room. It was seamless and</div>
<div class="t fb" style="top:657.4px">spotless. Food is below average for my</div>
<div class="t fb" style="top:674.0px">taste, I'd recommend providing more</div>
<div class="t fb" style="top:690.6px">options and dishes to choose from. The</div>
<div class="t fb" style="top:707.1px">facilities are ok but a bit dated. Overall, I</div>
<div class="t fb" style="top:723.7px">would say that the experience is average.</div>

</body></html>
